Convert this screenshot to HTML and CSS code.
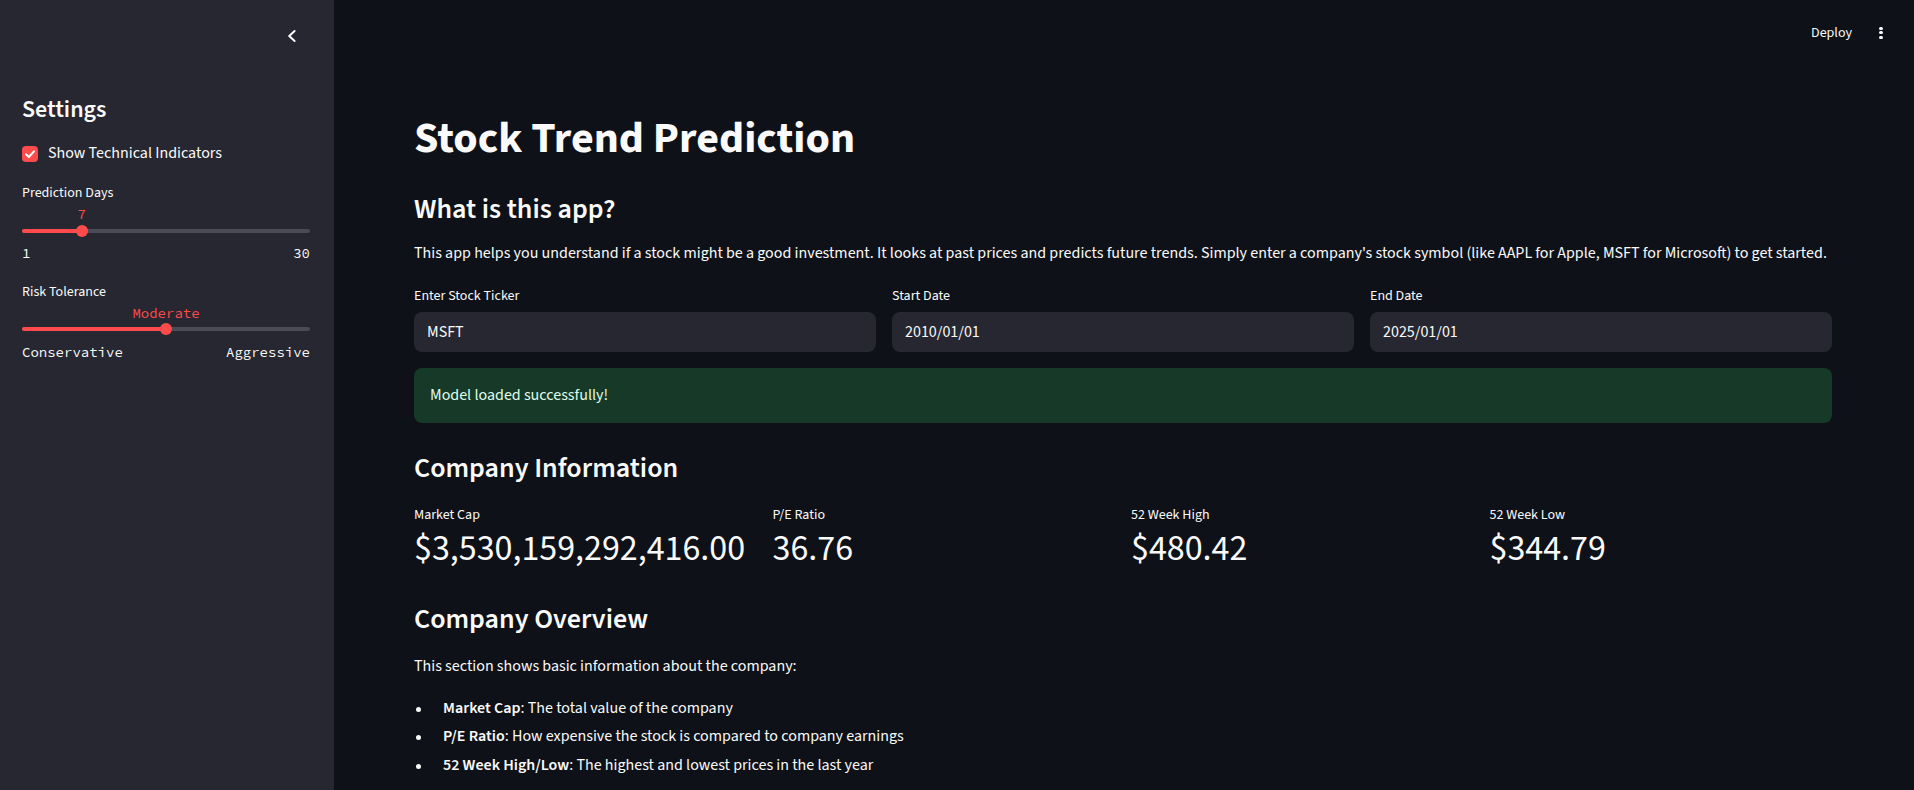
FILE: index.html
```html
<!DOCTYPE html>
<html lang="en">
<head>
<meta charset="utf-8">
<title>Stock Trend Prediction</title>
<link rel="stylesheet" href="styles.css">
</head>
<body>
<div class="app">
  <aside class="sidebar">
    <div class="sb-top">
      <button class="collapse" aria-label="Collapse sidebar">
        <svg width="16" height="16" viewBox="0 0 16 16"><path d="M10.6 3 L5.2 8 L10.6 13" fill="none" stroke="#fafafa" stroke-width="2" stroke-linecap="round" stroke-linejoin="round"/></svg>
      </button>
    </div>
    <h2 class="sb-title">Settings</h2>
    <label class="checkbox">
      <span class="box"><svg width="16" height="16" viewBox="0 0 16 16"><path d="M4 8.3 L6.8 11 L12 5.3" fill="none" stroke="#fff" stroke-width="2" stroke-linecap="round" stroke-linejoin="round"/></svg></span>
      <span class="checkbox-label">Show Technical Indicators</span>
    </label>

    <div class="field field-first">
      <div class="field-label">Prediction Days</div>
      <div class="slider">
        <div class="slider-value-row"><span class="slider-value" style="left:20.69%">7</span></div>
        <div class="slider-track">
          <div class="rail"><div class="fill" style="width:20.69%"></div></div>
          <div class="thumb" style="left:20.69%"></div>
        </div>
        <div class="slider-ticks"><span>1</span><span>30</span></div>
      </div>
    </div>

    <div class="field field-second">
      <div class="field-label">Risk Tolerance</div>
      <div class="slider">
        <div class="slider-value-row"><span class="slider-value" style="left:50%">Moderate</span></div>
        <div class="slider-track">
          <div class="rail"><div class="fill" style="width:50%"></div></div>
          <div class="thumb" style="left:50%"></div>
        </div>
        <div class="slider-ticks"><span>Conservative</span><span>Aggressive</span></div>
      </div>
    </div>
  </aside>

  <main class="main">
    <header class="topbar">
      <span class="deploy">Deploy</span>
      <span class="kebab"><i></i><i></i><i></i></span>
    </header>

    <div class="content">
      <h1 class="title">Stock Trend Prediction</h1>
      <h3 class="h3 h3-first">What is this app?</h3>
      <p class="intro">This app helps you understand if a stock might be a good investment. It looks at past prices and predicts future trends. Simply enter a company's stock symbol (like AAPL for Apple, MSFT for Microsoft) to get started.</p>

      <div class="inputs">
        <div class="input-field">
          <div class="input-label">Enter Stock Ticker</div>
          <div class="input-box">MSFT</div>
        </div>
        <div class="input-field">
          <div class="input-label">Start Date</div>
          <div class="input-box">2010/01/01</div>
        </div>
        <div class="input-field">
          <div class="input-label">End Date</div>
          <div class="input-box">2025/01/01</div>
        </div>
      </div>

      <div class="alert-success">Model loaded successfully!</div>

      <h3 class="h3 h3-info">Company Information</h3>
      <div class="metrics">
        <div class="metric">
          <div class="metric-label">Market Cap</div>
          <div class="metric-value">$3,530,159,292,416.00</div>
        </div>
        <div class="metric">
          <div class="metric-label">P/E Ratio</div>
          <div class="metric-value">36.76</div>
        </div>
        <div class="metric">
          <div class="metric-label">52 Week High</div>
          <div class="metric-value">$480.42</div>
        </div>
        <div class="metric">
          <div class="metric-label">52 Week Low</div>
          <div class="metric-value">$344.79</div>
        </div>
      </div>

      <h3 class="h3 h3-overview">Company Overview</h3>
      <p class="overview-text">This section shows basic information about the company:</p>
      <ul class="bullets">
        <li><span><strong>Market Cap</strong>: The total value of the company</span></li>
        <li><span><strong>P/E Ratio</strong>: How expensive the stock is compared to company earnings</span></li>
        <li><span><strong>52 Week High/Low</strong>: The highest and lowest prices in the last year</span></li>
      </ul>
    </div>
  </main>
</div>
</body>
</html>
```
FILE: styles.css
```css
* { box-sizing: border-box; }

html, body {
  margin: 0;
  padding: 0;
  height: 100%;
  background: #0e1117;
  overflow: hidden;
}

body {
  font-family: "Source Sans 3", "Source Sans Pro", Lato, sans-serif;
  color: #fafafa;
  font-size: 16px;
  line-height: 1.6;
}

.app {
  display: flex;
  height: 790px;
}

/* ---------- Sidebar ---------- */
.sidebar {
  width: 334px;
  flex: none;
  background: #262730;
  padding: 0 24px 0 22px;
  display: flex;
  flex-direction: column;
}

.sb-top {
  display: flex;
  justify-content: flex-end;
  padding-top: 28px;
  padding-right: 10px;
  height: 44px;
}

.collapse {
  width: 16px;
  height: 16px;
  padding: 0;
  border: 0;
  background: none;
  display: block;
}
.collapse svg { display: block; }

.sb-title {
  margin: 52px 0 0;
  font-size: 24px;
  font-weight: 600;
  line-height: 28.8px;
}

.checkbox {
  margin-top: 16.6px;
  display: flex;
  align-items: center;
  gap: 10px;
  height: 25.6px;
  font-size: 16px;
}

.box {
  width: 16px;
  height: 16px;
  border-radius: 4px;
  background: #ff4b4b;
  display: block;
  flex: none;
}
.box svg { display: block; }

.field-first { margin-top: 15.4px; }
.field-second { margin-top: 17.6px; }

.field-label {
  font-size: 14px;
  line-height: 22.4px;
}

.slider-value-row {
  position: relative;
  height: 20px;
}

.slider-value {
  position: absolute;
  top: -0.6px;
  transform: translateX(-50%);
  font-family: "Source Code Pro", "Liberation Mono", monospace;
  font-size: 14px;
  line-height: 20px;
  color: #ff4b4b;
  white-space: nowrap;
}

.slider-track {
  position: relative;
  height: 12px;
  display: flex;
  align-items: center;
}

.rail {
  width: 100%;
  height: 4px;
  border-radius: 2px;
  background: #4a4b55;
  overflow: hidden;
}

.fill {
  height: 100%;
  background: #ff4b4b;
}

.thumb {
  position: absolute;
  top: 0;
  width: 12px;
  height: 12px;
  margin-left: -6px;
  border-radius: 50%;
  background: #ff4b4b;
}

.slider-ticks {
  display: flex;
  justify-content: space-between;
  padding-top: 6.5px;
  font-family: "Source Code Pro", "Liberation Mono", monospace;
  font-size: 14px;
  line-height: 20px;
  color: #fafafa;
}

/* ---------- Main ---------- */
.main {
  flex: 1;
  min-width: 0;
  display: flex;
  flex-direction: column;
}

.topbar {
  display: flex;
  justify-content: flex-end;
  align-items: center;
  gap: 24px;
  padding: 21.6px 28px 0 0;
  height: 44px;
}

.deploy {
  font-size: 14px;
  line-height: 22.4px;
  color: #fafafa;
}

.kebab {
  width: 10px;
  height: 12px;
  display: flex;
  flex-direction: column;
  align-items: center;
  justify-content: space-between;
}
.kebab i {
  display: block;
  width: 3.2px;
  height: 3.2px;
  border-radius: 50%;
  background: #fafafa;
}

.content {
  padding: 0 82px 0 80px;
  display: flex;
  flex-direction: column;
}

.title {
  margin: 68.9px 0 0;
  font-size: 44px;
  font-weight: 700;
  line-height: 52.8px;
}

.h3 {
  margin: 0;
  font-size: 28px;
  font-weight: 600;
  line-height: 33.6px;
}
.h3-first { margin-top: 27.8px; }
.h3-info { margin-top: 29.5px; }
.h3-overview { margin-top: 30.4px; }

.intro {
  margin: 14.1px 0 0;
  line-height: 25.6px;
}

.inputs {
  margin-top: 18.6px;
  display: grid;
  grid-template-columns: repeat(3, 1fr);
  gap: 16px;
}

.input-label {
  font-size: 14px;
  line-height: 22.4px;
}

.input-box {
  margin-top: 4.2px;
  height: 40px;
  border-radius: 8px;
  background: #262730;
  padding: 0 13px;
  display: flex;
  align-items: center;
  font-size: 16px;
  line-height: 1.4;
}

.alert-success {
  margin-top: 16px;
  background: #173928;
  color: #dffde9;
  border-radius: 8px;
  padding: 15px 16px;
  line-height: 25px;
}

.metrics {
  margin-top: 17.6px;
  display: grid;
  grid-template-columns: repeat(4, 1fr);
  gap: 16px;
}

.metric-label {
  font-size: 14px;
  line-height: 22.4px;
}

.metric-value {
  font-size: 36px;
  line-height: 46.8px;
  white-space: nowrap;
}

.overview-text {
  margin: 17.1px 0 0;
  line-height: 25.6px;
}

.bullets {
  list-style: none;
  margin: 16.1px 0 0;
  padding: 0;
}

.bullets li {
  display: flex;
  line-height: 25.6px;
  margin-top: 2.9px;
}
.bullets li:first-child { margin-top: 0; }

.bullets li::before {
  content: "";
  flex: none;
  width: 5px;
  height: 5px;
  border-radius: 50%;
  background: #fafafa;
  margin: 11px 22px 0 2px;
}

.bullets strong { font-weight: 600; }
```
